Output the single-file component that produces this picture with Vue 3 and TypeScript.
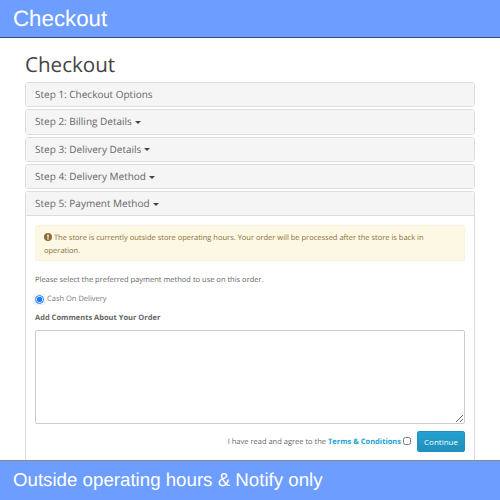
<template>
  <div class="page">
    <header class="banner top">Checkout</header>
    <main class="content">
      <h1>Checkout</h1>
      <div v-for="step in closedSteps" :key="step.title" class="panel">
        <div class="panel-heading">
          {{ step.title }}<i v-if="step.caret" class="caret"></i>
        </div>
      </div>
      <div class="panel open">
        <div class="panel-heading">Step 5: Payment Method<i class="caret"></i></div>
        <div class="panel-body">
          <div class="alert">
            <svg class="alert-icon" viewBox="0 0 16 16" width="8" height="8">
              <circle cx="8" cy="8" r="8" fill="#8a6d3b" />
              <rect x="6.6" y="3" width="2.8" height="6.5" fill="#fcf8e3" />
              <rect x="6.6" y="10.6" width="2.8" height="2.6" fill="#fcf8e3" />
            </svg>
            The store is currently outside store operating hours. Your order will be processed after the store is back in operation.
          </div>
          <p class="hint">Please select the preferred payment method to use on this order.</p>
          <label class="radio-row">
            <input type="radio" name="payment" checked />
            <span>Cash On Delivery</span>
          </label>
          <p class="comment-label">Add Comments About Your Order</p>
          <textarea class="comments"></textarea>
          <div class="actions">
            <span class="agree">I have read and agree to the <a href="#">Terms &amp; Conditions</a></span>
            <input class="check" type="checkbox" />
            <button class="continue" type="button">Continue</button>
          </div>
        </div>
      </div>
    </main>
    <footer class="banner bottom">Outside operating hours &amp; Notify only</footer>
  </div>
</template>

<script setup lang="ts">
const closedSteps = [
  { title: 'Step 1: Checkout Options', caret: false },
  { title: 'Step 2: Billing Details', caret: true },
  { title: 'Step 3: Delivery Details', caret: true },
  { title: 'Step 4: Delivery Method', caret: true }
]
</script>

<style>
html, body {
  margin: 0;
  overflow: hidden;
}
</style>

<style scoped>
.page {
  width: 500px;
  height: 500px;
  display: flex;
  flex-direction: column;
  overflow: hidden;
  background: #fff;
  font-family: "Open Sans", sans-serif;
  color: #666;
  text-rendering: geometricPrecision;
}

.banner {
  flex: none;
  background: #6d9eff;
  color: #fff;
  font-family: "Liberation Sans", Arial, sans-serif;
  padding-left: 13px;
}

.top {
  height: 37px;
  line-height: 37px;
  font-size: 22.3px;
  border-bottom: 1px solid #2f4f86;
}

.bottom {
  height: 39px;
  line-height: 37px;
  font-size: 18.7px;
  border-top: 1px solid #8c8c8c;
}

.content {
  flex: 1;
  min-height: 0;
  overflow: hidden;
  padding: 0 25px;
}

h1 {
  margin: 12px 0 2px;
  font-size: 20.6px;
  line-height: 30px;
  font-weight: 400;
  color: #444;
}

.panel {
  border: 1px solid #ddd;
  border-radius: 3px;
  margin-bottom: 2px;
  box-sizing: border-box;
}

.panel-heading {
  height: 23.3px;
  line-height: 22.6px;
  padding: 0 9px;
  background: #f5f5f5;
  font-size: 10px;
  color: #666;
}

.open .panel-heading {
  border-bottom: 1px solid #ddd;
}

.caret {
  display: inline-block;
  margin-left: 3px;
  vertical-align: middle;
  border-top: 3px solid #444;
  border-left: 3px solid transparent;
  border-right: 3px solid transparent;
}

.panel-body {
  padding: 9px 9px 0;
  height: 300px;
}

.alert {
  box-sizing: border-box;
  height: 36px;
  padding: 6px 8px 0;
  background: #fcf8e3;
  border: 1px solid #fbf3dc;
  border-radius: 2px;
  color: #8a6d3b;
  font-size: 7.5px;
  line-height: 12.7px;
}

.alert-icon {
  vertical-align: -1px;
}

.hint {
  margin: 13px 0 0;
  font-size: 7.5px;
  line-height: 12px;
}

.radio-row {
  display: flex;
  align-items: center;
  gap: 3px;
  margin-top: 7px;
  font-size: 7.5px;
  line-height: 12px;
  color: #777;
}

.radio-row input {
  margin: 0;
  width: 9px;
  height: 9px;
  accent-color: #1e7bff;
  box-shadow: 0 0 0 0.5px #cfe2ff;
  border-radius: 50%;
}

.comment-label {
  margin: 7px 0 0;
  font-size: 7.5px;
  line-height: 12px;
  font-weight: 700;
}

.comments {
  display: block;
  box-sizing: border-box;
  width: 100%;
  height: 94px;
  margin-top: 6px;
  border: 1px solid #ccc;
  border-radius: 2px;
  background: #fff;
}

.actions {
  display: flex;
  align-items: center;
  justify-content: flex-end;
  margin-top: 7px;
}

.agree {
  font-size: 7.5px;
  color: #666;
}

.agree a {
  color: #23a1d1;
  font-weight: 700;
  text-decoration: none;
}

.check {
  margin: 0 0 2px 2px;
  width: 8px;
  height: 8px;
}

.continue {
  width: 48px;
  height: 21px;
  margin-left: 6px;
  padding: 0;
  border: 1px solid #1f90bb;
  border-radius: 2px;
  background: linear-gradient(#23a1d1, #1f90bb);
  color: #fff;
  font-family: "Open Sans", sans-serif;
  font-size: 8px;
}
</style>
